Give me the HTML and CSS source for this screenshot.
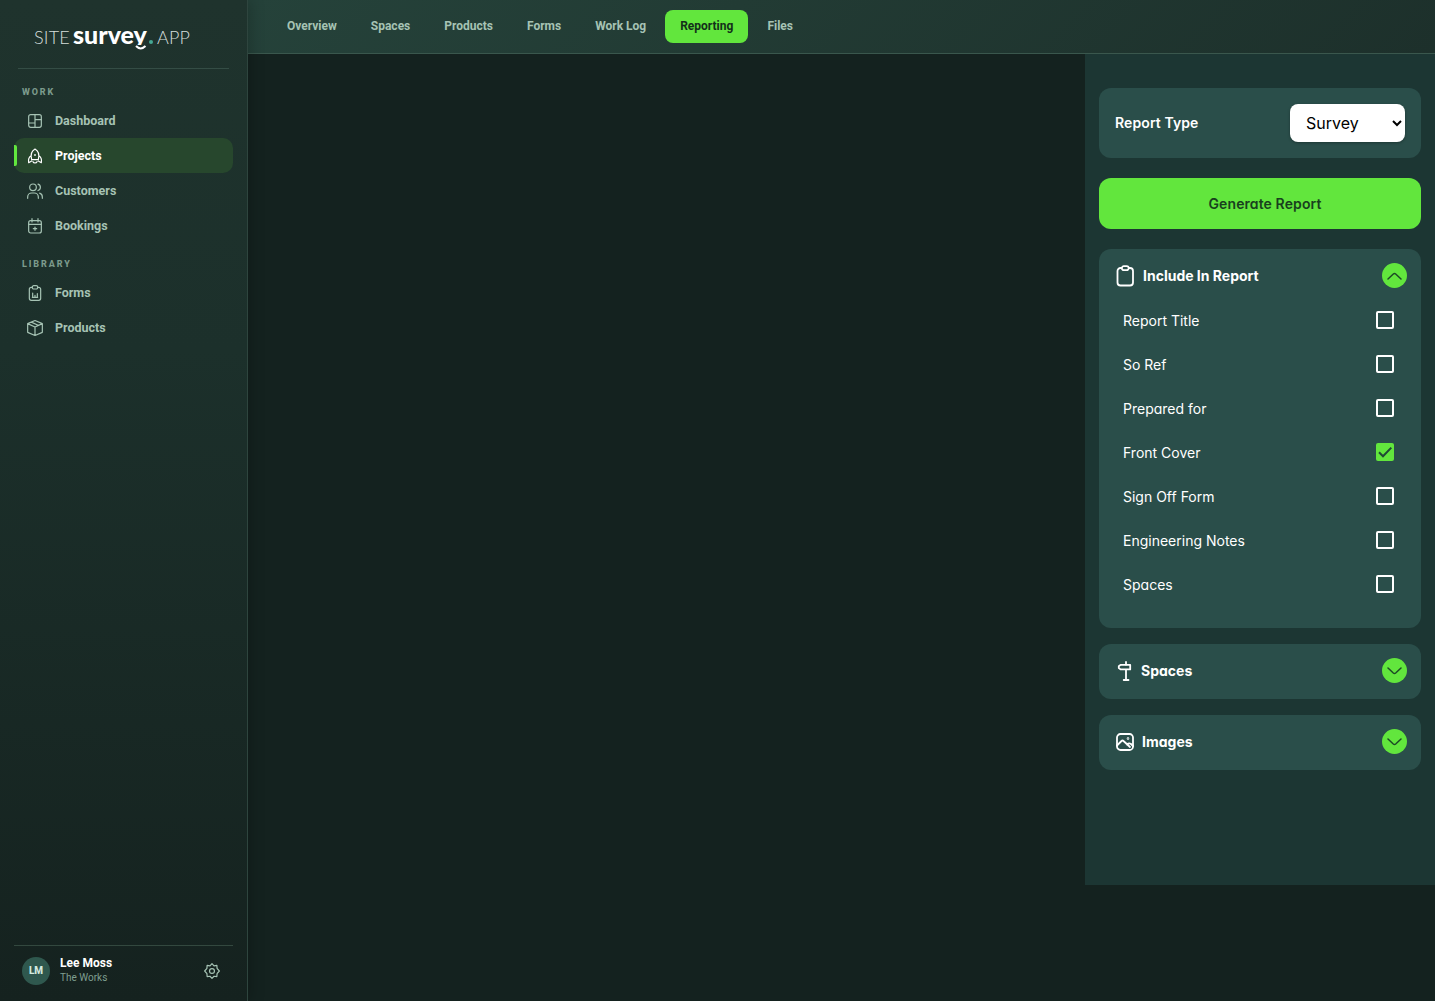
FILE: index.html
```html
<!DOCTYPE html>
<html lang="en">
<head>
<meta charset="utf-8">
<title>Site Survey App – Reporting</title>
<link rel="stylesheet" href="styles.css">
</head>
<body>
<div class="app">
  <aside class="sidebar">
    <div class="logo"><span class="logo-site">SITE</span><span class="logo-survey">survey</span><span class="logo-dot"></span><span class="logo-app">APP</span>
      <svg class="logo-smile" width="12" height="6" viewBox="0 0 12 6"><path d="M1 1Q5.700 5.800 10.500 1" fill="none" stroke="#fff" stroke-width="2"/></svg>
    </div>
    <nav class="nav">
      <h2 class="nav-title">WORK</h2>
      <a class="nav-item"><svg class="icon" viewBox="0 0 24 24"><rect x="2.5" y="2.5" width="19" height="19" rx="3"/><path d="M12 2.5v19M2.5 15H12M12 10h9.5"/></svg>Dashboard</a>
      <a class="nav-item active"><svg class="icon" viewBox="0 0 24 24"><path d="M7 17.5C5 10 7.500 4 12 1.500c4.500 2.500 7 8.500 5 16zM6.200 11.500C3.500 13 1.500 16 2.500 22l4.500-2.500M17.800 11.500C20.500 13 22.500 16 21.500 22L17 19.500M9 20.500c1 2.500 5 2.500 6 0"/><circle cx="12" cy="10.500" r=".5"/></svg>Projects</a>
      <a class="nav-item"><svg class="icon" viewBox="0 0 24 24"><circle cx="9" cy="6.500" r="5"/><path d="M1 23v-2a6 6 0 0 1 6-6h4a6 6 0 0 1 6 6v2M16.500 1.700a5 5 0 0 1 0 9.600M19 15.200c2.500.8 4 3 4 5.800v2"/></svg>Customers</a>
      <a class="nav-item"><svg class="icon" viewBox="0 0 24 24"><rect x="2.500" y="4" width="19" height="18.500" rx="3"/><path d="M7.500 1v5M16.500 1v5M2.500 9.500h19M12 13.500v5M9.500 16h5"/></svg>Bookings</a>
      <h2 class="nav-title">LIBRARY</h2>
      <a class="nav-item"><svg class="icon" viewBox="0 0 24 24"><path d="M8 3.500H6.500a3 3 0 0 0-3 3V20a3 3 0 0 0 3 3h11a3 3 0 0 0 3-3V6.500a3 3 0 0 0-3-3H16"/><rect x="8" y="1" width="8" height="5" rx="2"/><path d="M8.500 12v6.500M12 15.500v3M15.500 13v5.500M8 18.500h8"/></svg>Forms</a>
      <a class="nav-item"><svg class="icon" viewBox="0 0 24 24"><path d="M12 .8 23 5.500v13L12 23.200 1 18.500v-13zM1 5.500l11 5 11-5M12 10.500v12.700M6.500 3.200l11 5"/></svg>Products</a>
    </nav>
    <footer class="account">
      <span class="avatar">LM</span>
      <div class="who"><strong>Lee Moss</strong><span>The Works</span></div>
      <svg class="icon gear" viewBox="0 0 24 24"><path d="M12 1 15 4.200l4.300-.6.300 4.300L23 12l-3.400 3.800-.3 4.500-4.300-.4-3 3.100-3-3.100-4.300.4-.3-4.500L1 12l3.400-4.100.3-4.300 4.300.6z"/><circle cx="12" cy="12" r="3.700"/></svg>
    </footer>
  </aside>
  <main class="main">
    <header class="tabs">
      <a class="tab">Overview</a><a class="tab">Spaces</a><a class="tab">Products</a><a class="tab">Forms</a><a class="tab">Work Log</a><a class="tab selected">Reporting</a><a class="tab">Files</a>
    </header>
    <div class="workspace">
      <aside class="panel">
        <section class="card type-card">
          <span class="label">Report Type</span>
          <div class="select">Survey<svg width="10" height="7" viewBox="0 0 10 7"><path d="m1 1 4 4 4-4" fill="none" stroke="#000" stroke-width="2"/></svg></div>
        </section>
        <button class="generate">Generate Report</button>
        <section class="card include">
          <header class="card-head">
            <svg class="head-icon" width="20" height="22" viewBox="0 0 20 22"><path d="M6.500 3H5.500a3 3 0 0 0-3 3v11.500a3 3 0 0 0 3 3h9.500a3 3 0 0 0 3-3V6a3 3 0 0 0-3-3h-1"/><rect x="6.800" y="1.200" width="6.900" height="4" rx="2"/></svg>
            <span class="include-title">Include In Report</span>
            <span class="toggle up"><svg width="15" height="8" viewBox="0 0 15 8"><path d="m1 1 5.300 5Q7.500 7 8.700 6L14 1"/></svg></span>
          </header>
          <ul class="options">
            <li><span class="name">Report Title</span><span class="box"></span></li>
            <li><span class="name">So Ref</span><span class="box"></span></li>
            <li><span class="name">Prepared for</span><span class="box"></span></li>
            <li><span class="name">Front Cover</span><span class="box checked"><svg width="18" height="18" viewBox="0 0 18 18"><path d="m3 9.200 4 4 8.300-8.600"/></svg></span></li>
            <li><span class="name">Sign Off Form</span><span class="box"></span></li>
            <li><span class="name">Engineering Notes</span><span class="box"></span></li>
            <li><span class="name">Spaces</span><span class="box"></span></li>
          </ul>
        </section>
        <section class="card">
          <header class="card-head">
            <svg class="head-icon" width="20" height="22" viewBox="0 0 20 22"><path d="M11 2v3M11 9.500v10.500M8.700 20h4.800M5.500 4.900h9.700v4.500H5.500L3.800 8V6.300z"/></svg>
            <span class="spaces-title">Spaces</span>
            <span class="toggle"><svg width="15" height="8" viewBox="0 0 15 8"><path d="m1 1 5.300 5Q7.500 7 8.700 6L14 1"/></svg></span>
          </header>
        </section>
        <section class="card">
          <header class="card-head">
            <svg class="head-icon" width="20" height="22" viewBox="0 0 20 22"><rect x="2" y="3" width="16" height="16" rx="3.500"/><path d="M2 14.500 6.500 10q1-1 2 0l6.500 6M12 13.500q2-2 4-.5l2 2"/><circle cx="13" cy="7.500" r=".4"/></svg>
            <span class="images-title">Images</span>
            <span class="toggle"><svg width="15" height="8" viewBox="0 0 15 8"><path d="m1 1 5.300 5Q7.500 7 8.700 6L14 1"/></svg></span>
          </header>
        </section>
      </aside>
    </div>
  </main>
</div>
</body>
</html>
```
FILE: styles.css
```css
* { box-sizing: border-box; }
body { margin: 0; background: #14221f; font-family: Roboto, sans-serif; }
.app { display: flex; height: 1001px; overflow: hidden; }

.sidebar {
  width: 248px; flex: none; display: flex; flex-direction: column;
  padding: 0 14px; border-right: 1px solid #2e453e;
  background: linear-gradient(180deg, #1f332d 0%, #1c302b 35%, #15221f 100%);
  box-shadow: 2px 0 14px rgba(0, 0, 0, .22); z-index: 1;
}
.logo {
  position: relative; height: 69px; margin: 0 4px; padding: 21px 0 0 16px;
  display: flex; align-items: baseline; border-bottom: 1px solid #344d45;
  color: #fff; line-height: 26px; white-space: nowrap;
}
.logo-site, .logo-app { font-family: Lato, sans-serif; font-weight: 300; font-size: 18px; letter-spacing: .2px; color: #d5dedb; }
.logo-site { width: 39px; }
/* The descender is cut at the baseline; the smile below takes its place. */
.logo-survey { font-family: Lato, sans-serif; font-weight: 900; font-size: 25px; letter-spacing: 0; width: 76px; clip-path: inset(0 0 2px 0); }
.logo-dot { width: 4px; height: 4px; border-radius: 50%; background: #45a894; margin-right: 4px; }
.logo-smile { position: absolute; left: 117px; top: 45px; }

.nav-title {
  margin: 0; padding-left: 8px; height: 20px; line-height: 20px;
  font-size: 9px; font-weight: 800; letter-spacing: 1.9px; color: #7c9b8c;
}
.nav { padding-top: 13px; }
.nav-title:first-child { margin-bottom: 1px; }
.nav-item ~ .nav-title { margin: 11px 0 1px; }
.nav-item {
  position: relative; display: flex; align-items: center; gap: 12px;
  height: 35px; padding-left: 13px; border-radius: 10px;
  font-size: 12.5px; font-weight: 700; color: #a6c3b4;
}
.nav-item.active { background: #27472d; color: #fff; }
.nav-item.active::before {
  content: ""; position: absolute; left: 0; top: 7px; width: 3px; height: 21px;
  border-radius: 0 2px 2px 0; background: #62e83e;
}
.icon { width: 16px; height: 16px; fill: none; stroke: currentColor; stroke-width: 1.8; stroke-linejoin: round; stroke-linecap: round; }

.account {
  margin-top: auto; height: 56px; padding: 0 13px 6px 8px; display: flex; align-items: center;
  border-top: 1px solid #33483f; color: #a6c3b4;
}
.avatar {
  width: 28px; height: 28px; border-radius: 50%; background: #2f584e; color: #d5ebe0;
  font-size: 10px; font-weight: 800; line-height: 28px; text-align: center;
}
.who { flex: 1; padding-left: 10px; display: flex; flex-direction: column; line-height: 14px; font-size: 10px; color: #7f9f90; }
.who strong { font-size: 12px; line-height: 15px; color: #fff; }

.main { flex: 1; display: flex; flex-direction: column; }
.tabs {
  height: 54px; flex: none; display: flex; gap: 4px; padding: 10px 24px;
  border-bottom: 1px solid #3a574d;
  background: linear-gradient(135deg, #25423a 0%, #223b34 40%, #1d302b 100%);
}
.tab { height: 33px; padding: 0 15px; border-radius: 8px; line-height: 33px; font-size: 12px; font-weight: 700; color: #a6c3b4; }
.tab.selected { background: #62e63d; color: #13301a; }

.workspace { flex: 1; display: flex; justify-content: flex-end; }
.panel {
  width: 350px; height: 831px; padding: 34px 14px; background: #1c3633;
  display: flex; flex-direction: column; gap: 16px; color: #fff;
  font-family: Inter, sans-serif; font-feature-settings: "cv11"; font-size: 14px;
}
.card { background: #2a4e4a; border-radius: 12px; }
.type-card { height: 70px; padding: 0 16px; display: flex; align-items: center; justify-content: space-between; }
.label { font-weight: 600; letter-spacing: .1px; padding-bottom: 2px; }
.select {
  width: 115px; height: 38px; padding: 0 3px 0 16px; border-radius: 8px; background: #fff; color: #000;
  display: flex; align-items: center; justify-content: space-between;
  font-size: 16px; font-feature-settings: normal; box-shadow: 0 1px 3px rgba(0, 0, 0, .3);
}
.generate {
  height: 51px; margin: 4px 0; padding: 0 0 0 10px; border: 0; border-radius: 12px;
  background: #62e63d; color: #18401e; font: 600 14px Inter, sans-serif; font-feature-settings: "cv11"; letter-spacing: .1px;
}
.include { height: 379px; }
.card-head { height: 55px; padding: 0 14px 2px 16px; display: flex; align-items: center; }
.head-icon { fill: none; stroke: #fff; stroke-width: 1.8; stroke-linejoin: round; stroke-linecap: round; }
.card-head span:not(.toggle) { font-weight: 700; padding-bottom: 1px; }
.include-title { margin-left: 8px; }
.spaces-title { margin-left: 6px; }
.images-title { margin-left: 7px; }
.toggle { width: 25px; height: 25px; margin-left: auto; border-radius: 50%; background: #62e63d; display: grid; place-items: center; }
.toggle svg { fill: none; stroke: #1c4a25; stroke-width: 1.5; stroke-linecap: round; }
.toggle.up svg { transform: rotate(180deg); }
.options { list-style: none; margin: -5px 0 0; padding: 0 27px 0 24px; }
.options li { height: 44px; display: flex; align-items: center; justify-content: space-between; }
.name { padding-bottom: 2px; }
.box { width: 18px; height: 18px; border: 2px solid #fff; border-radius: 2px; margin-bottom: 2px; }
.box.checked { border: 0; background: #62e63d; }
.box svg { display: block; fill: none; stroke: #1f4a35; stroke-width: 2; }
```
